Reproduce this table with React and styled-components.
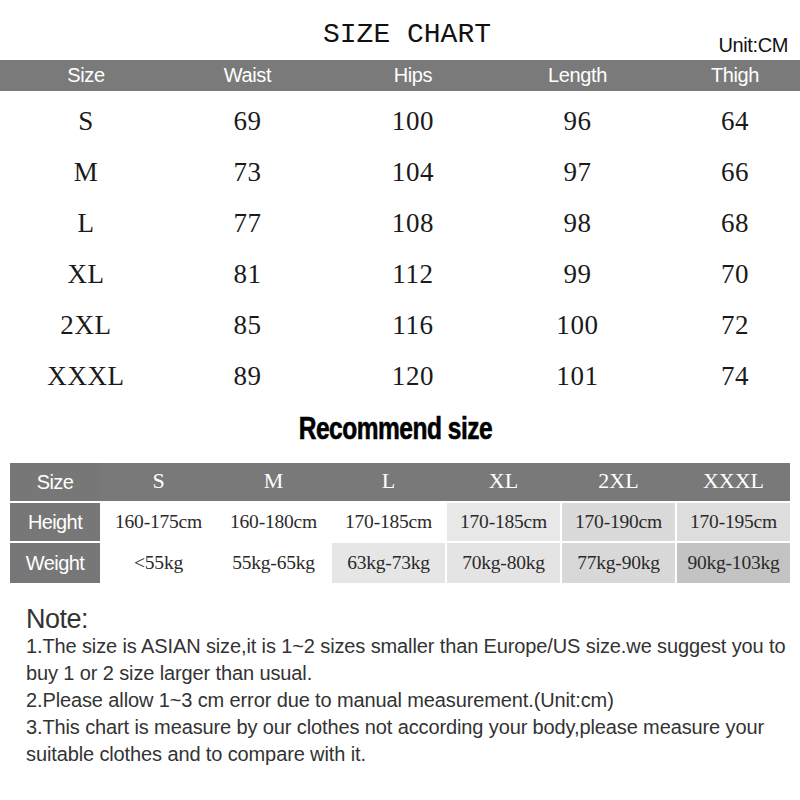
import styled, { createGlobalStyle } from 'styled-components';

const GlobalStyle = createGlobalStyle`
  html, body {
    margin: 0;
    padding: 0;
    background: #fff;
  }
  body {
    width: 800px;
    height: 800px;
    overflow: hidden;
    font-family: "Liberation Sans", Arial, sans-serif;
  }
`;

const Page = styled.div`
  width: 800px;
  height: 800px;
  background: #fff;
  display: flex;
  flex-direction: column;
`;

const TitleBar = styled.div`
  height: 60px;
  display: grid;
  grid-template-columns: 1fr auto 1fr;
  padding-left: 14px;
  box-sizing: border-box;
`;

const Title = styled.h1`
  grid-column: 2;
  margin: 0;
  padding-top: 20px;
  font-family: "Liberation Mono", "DejaVu Sans Mono", monospace;
  font-weight: normal;
  font-size: 28px;
  line-height: 30px;
  color: #111;
`;

const Unit = styled.span`
  grid-column: 3;
  justify-self: end;
  align-self: end;
  padding: 0 12px 3px 0;
  font-size: 20px;
  letter-spacing: -0.4px;
  color: #111;
`;

const ChartGrid = styled.div`
  display: grid;
  grid-template-columns: 160px 163px 168px 161px 1fr;
  padding-left: 6px;
  background: ${p => (p.$head ? '#7a7a7a' : 'transparent')};
  height: ${p => (p.$head ? '31px' : '51px')};
  align-items: center;
  & > :nth-child(5) {
    padding-left: 12px;
  }
`;

const ChartBody = styled.div`
  padding-top: 5px;
  display: flex;
  flex-direction: column;
`;

const HeadCell = styled.div`
  text-align: center;
  color: #fff;
  font-size: 20px;
  letter-spacing: -0.4px;
`;

const DataCell = styled.div`
  text-align: center;
  color: #1a1a1a;
  font-family: "Liberation Serif", "Times New Roman", serif;
  font-size: 27px;
  letter-spacing: 0.6px;
`;

const Subtitle = styled.h2`
  margin: 0;
  height: 61px;
  box-sizing: border-box;
  padding: 0 10px 8px 0;
  display: flex;
  align-items: center;
  justify-content: center;
  font-weight: bold;
  font-size: 31px;
  letter-spacing: -0.6px;
  color: #000;
  -webkit-text-stroke: 0.6px #000;
`;

const Squeezed = styled.span`
  display: inline-block;
  transform: scaleX(0.79);
`;

const RecTable = styled.div`
  margin: 0 10px;
  display: flex;
  flex-direction: column;
  gap: 2px;
`;

const RecRow = styled.div`
  display: grid;
  grid-template-columns: 90px repeat(6, 1fr);
  column-gap: 2px;
  height: ${p => p.$h}px;
  background: ${p => (p.$head ? '#797979' : 'transparent')};
`;

const LabelCell = styled.div`
  background: #777;
  color: #fff;
  font-size: 20px;
  letter-spacing: -0.6px;
  display: flex;
  align-items: center;
  justify-content: center;
`;

const SizeCell = styled.div`
  color: #fff;
  font-family: "Liberation Serif", "Times New Roman", serif;
  font-size: 22px;
  display: flex;
  align-items: center;
  justify-content: center;
  padding-bottom: 2px;
`;

const ValueCell = styled.div`
  background: ${p => p.$bg};
  color: #2a2a2a;
  font-family: "Liberation Serif", "Times New Roman", serif;
  font-size: 19.5px;
  letter-spacing: -0.2px;
  display: flex;
  align-items: center;
  justify-content: center;
`;

const Notes = styled.div`
  padding: 22px 8px 0 26px;
  color: #333;
`;

const NoteTitle = styled.div`
  font-size: 27px;
  line-height: 28px;
  letter-spacing: -0.5px;
`;

const NoteLine = styled.p`
  margin: 0;
  font-size: 20px;
  line-height: 27px;
  letter-spacing: -0.12px;
`;

const columns = ['Size', 'Waist', 'Hips', 'Length', 'Thigh'];

const chart = [
  ['S', 69, 100, 96, 64],
  ['M', 73, 104, 97, 66],
  ['L', 77, 108, 98, 68],
  ['XL', 81, 112, 99, 70],
  ['2XL', 85, 116, 100, 72],
  ['XXXL', 89, 120, 101, 74],
];

const sizes = ['S', 'M', 'L', 'XL', '2XL', 'XXXL'];

const heights = [
  ['160-175cm', '#fff'],
  ['160-180cm', '#fff'],
  ['170-185cm', '#fff'],
  ['170-185cm', '#e8e8e8'],
  ['170-190cm', '#dadada'],
  ['170-195cm', '#dddddd'],
];

const weights = [
  ['<55kg', '#fff'],
  ['55kg-65kg', '#fff'],
  ['63kg-73kg', '#e6e6e6'],
  ['70kg-80kg', '#e4e4e4'],
  ['77kg-90kg', '#d8d8d8'],
  ['90kg-103kg', '#c3c3c3'],
];

export default function App() {
  return (
    <Page>
      <GlobalStyle />
      <TitleBar>
        <Title>SIZE CHART</Title>
        <Unit>Unit:CM</Unit>
      </TitleBar>

      <ChartGrid $head>
        {columns.map(c => <HeadCell key={c}>{c}</HeadCell>)}
      </ChartGrid>
      <ChartBody>
        {chart.map(row => (
          <ChartGrid key={row[0]}>
            {row.map((v, i) => <DataCell key={i}>{v}</DataCell>)}
          </ChartGrid>
        ))}
      </ChartBody>

      <Subtitle><Squeezed>Recommend size</Squeezed></Subtitle>

      <RecTable>
        <RecRow $head $h={38}>
          <LabelCell>Size</LabelCell>
          {sizes.map(s => <SizeCell key={s}>{s}</SizeCell>)}
        </RecRow>
        <RecRow $h={38}>
          <LabelCell>Height</LabelCell>
          {heights.map(([v, bg], i) => <ValueCell key={i} $bg={bg}>{v}</ValueCell>)}
        </RecRow>
        <RecRow $h={40}>
          <LabelCell>Weight</LabelCell>
          {weights.map(([v, bg], i) => <ValueCell key={i} $bg={bg}>{v}</ValueCell>)}
        </RecRow>
      </RecTable>

      <Notes>
        <NoteTitle>Note:</NoteTitle>
        <NoteLine>1.The size is ASIAN size,it is 1~2 sizes smaller than Europe/US size.we suggest you to buy 1 or 2 size larger than usual.</NoteLine>
        <NoteLine>2.Please allow 1~3 cm error due to manual measurement.(Unit:cm)</NoteLine>
        <NoteLine>3.This chart is measure by our clothes not according your body,please measure your suitable clothes and to compare with it.</NoteLine>
      </Notes>
    </Page>
  );
}
